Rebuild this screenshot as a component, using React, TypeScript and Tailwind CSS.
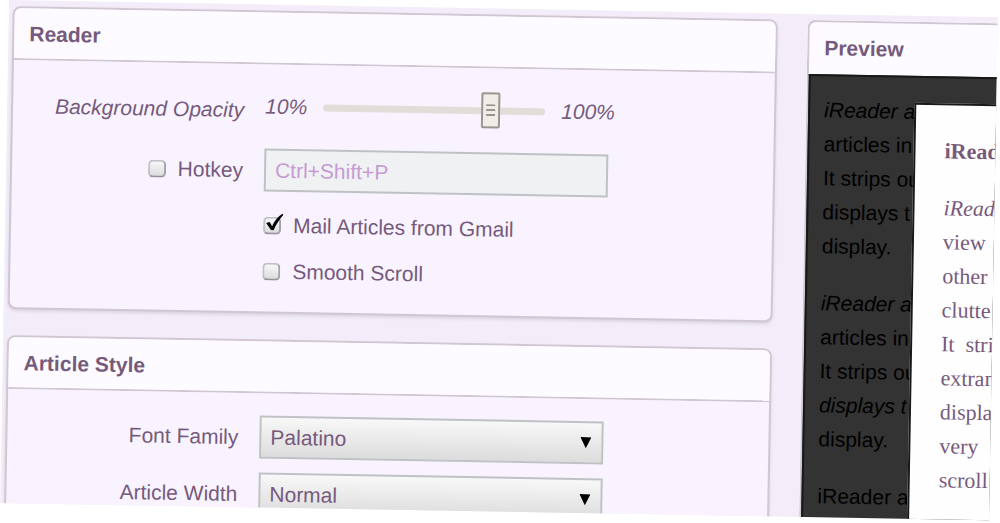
import React, { useState } from "react";

const previewText = [
  ["iReader a", "articles in", "It strips ou", "displays t", "display."],
  ["iReader a", "articles in", "It strips ou", "displays t", "display."],
  ["iReader a"],
];

const articleLines = ["iRead", "view", "other", "clutte", "It  stri", "extran", "displa", "very", "scroll"];

const articleFields = [
  { id: "font-family", label: "Font Family", options: ["Palatino", "Georgia", "Helvetica"] },
  { id: "article-width", label: "Article Width", options: ["Normal", "Narrow", "Wide"] },
];

function Panel({ title, children }: { title: string; children: React.ReactNode }) {
  return (
    <section className="rounded-lg border-2 border-[#d0c7d3] bg-[#f8f3fe] shadow-[0_2px_3px_#ddd5e2]">
      <h2 className="h-[52px] rounded-t-md border-b-2 border-[#d0c7d3] bg-[#fdfbff] px-[15px] text-[21px] font-bold leading-[52px]">
        {title}
      </h2>
      {children}
    </section>
  );
}

function Checkbox({ id, checked, onChange }: { id: string; checked: boolean; onChange: (v: boolean) => void }) {
  return (
    <span className="relative inline-flex">
      <input
        id={id}
        type="checkbox"
        checked={checked}
        onChange={(e) => onChange(e.target.checked)}
        className="h-[18px] w-[18px] appearance-none rounded-[5px] border-2 border-[#c4c0c7] border-b-[#96929a] border-r-[#a5a1a8] bg-linear-to-b from-[#f8f8f8] to-[#dcdcdc]"
      />
      {checked && (
        <svg className="pointer-events-none absolute -top-1 left-0" width="22" height="22" viewBox="0 0 22 22">
          <path d="M3 10.500 L6.500 9.500 L9 13.500 C11.500 8 14.500 4 19 1 L20 2 C16 7 13 12 10.500 17.500 L8 17.500 Z" fill="#000" />
        </svg>
      )}
    </span>
  );
}

export default function App() {
  const [opacity, setOpacity] = useState(80);
  const [hotkey, setHotkey] = useState(false);
  const [mail, setMail] = useState(true);
  const [smooth, setSmooth] = useState(false);

  return (
    <div className="h-screen overflow-hidden bg-white pl-[9px] pr-[2px] font-['Liberation_Sans',sans-serif] text-[21px] text-[#765a7c]">
      <main className="flex h-[calc(100vh-20px)] origin-top-left rotate-1 gap-[30px] overflow-hidden bg-[#f3ecf9] pl-1 pt-[6px]">
        <div className="flex min-w-0 flex-1 flex-col gap-[26px]">
          <Panel title="Reader">
            <div className="grid grid-cols-[231px_1fr] items-center gap-x-[21px] gap-y-[14px] pb-6 pt-[22px]">
              <label htmlFor="opacity" className="text-right italic">
                Background Opacity
              </label>
              <div className="flex h-12 items-center gap-4 pb-2">
                <span className="italic">10%</span>
                <input
                  id="opacity"
                  type="range"
                  min={10}
                  max={100}
                  value={opacity}
                  onChange={(e) => setOpacity(Number(e.target.value))}
                  className="h-[7px] w-[222px] appearance-none rounded-sm bg-[#e2ddd8] [&::-webkit-slider-thumb]:h-9 [&::-webkit-slider-thumb]:w-[19px] [&::-webkit-slider-thumb]:appearance-none [&::-webkit-slider-thumb]:rounded-xs [&::-webkit-slider-thumb]:border-2 [&::-webkit-slider-thumb]:border-[#9c958d] [&::-webkit-slider-thumb]:bg-[#f0ece7] [&::-webkit-slider-thumb]:bg-[repeating-linear-gradient(#9c958d_0_2px,transparent_2px_5px)] [&::-webkit-slider-thumb]:bg-[length:9px_12px] [&::-webkit-slider-thumb]:bg-center [&::-webkit-slider-thumb]:bg-no-repeat"
                />
                <span className="italic">100%</span>
              </div>

              <div className="flex items-center justify-end gap-3">
                <Checkbox id="hotkey" checked={hotkey} onChange={setHotkey} />
                <label htmlFor="hotkey">Hotkey</label>
              </div>
              <input
                type="text"
                aria-label="Hotkey combination"
                defaultValue="Ctrl+Shift+P"
                className="h-[43px] w-[344px] border-2 border-[#bfc2c4] bg-[#f0f1f3] px-[9px] text-[#c79bd3]"
              />

              <div className="col-start-2 flex flex-col gap-[14px] pt-1">
                <div className="flex h-8 items-center gap-3">
                  <Checkbox id="mail" checked={mail} onChange={setMail} />
                  <label htmlFor="mail">Mail Articles from Gmail</label>
                </div>
                <div className="flex h-8 items-center gap-3">
                  <Checkbox id="smooth" checked={smooth} onChange={setSmooth} />
                  <label htmlFor="smooth">Smooth Scroll</label>
                </div>
              </div>
            </div>
          </Panel>

          <Panel title="Article Style">
            <div className="grid grid-cols-[231px_1fr] items-center gap-x-[21px] gap-y-[14px] pb-6 pt-[22px]">
              {articleFields.map((field) => (
                <React.Fragment key={field.id}>
                  <label htmlFor={field.id} className="text-right">
                    {field.label}
                  </label>
                  <div className="relative w-[344px]">
                    <select
                      id={field.id}
                      className="h-[43px] w-full appearance-none border-2 border-[#bfc2c4] bg-linear-to-b from-[#f8f8f8] to-[#dcdcdc] px-[9px]"
                    >
                      {field.options.map((option) => (
                        <option key={option}>{option}</option>
                      ))}
                    </select>
                    <svg className="pointer-events-none absolute right-3 top-4" width="11" height="11" viewBox="0 0 11 11">
                      <path d="M0 0h11L5.500 11z" fill="#000" />
                    </svg>
                  </div>
                </React.Fragment>
              ))}
            </div>
          </Panel>
        </div>

        <aside className="flex w-[190px] shrink-0 flex-col rounded-tl-lg border-l-2 border-t-2 border-[#d0c7d3] bg-[#fdfbff]">
          <h2 className="h-[52px] shrink-0 px-[15px] text-[21px] font-bold leading-[52px]">Preview</h2>
          <div className="relative flex-1 border-2 border-r-0 border-[#181818] bg-[#333]">
            <div className="px-[14px] pt-[17px] leading-[34px] text-black">
              {previewText.map((lines, i) => (
                <div key={i} className="mb-[23px]">
                  {lines.map((line, j) => (
                    <p
                      key={j}
                      className={(i < 2 && j === 0) || (i === 1 && j === 3) ? "whitespace-nowrap italic" : "whitespace-nowrap"}
                    >
                      {line}
                    </p>
                  ))}
                </div>
              ))}
            </div>
            <article className="absolute -bottom-1 left-[104px] right-0 top-[25px] overflow-hidden border-l-2 border-t-2 border-[#181818] bg-[#fefefe] pl-[29px] pt-[29px] font-['Liberation_Serif',serif] text-[22px] leading-[34px]">
              <h3 className="mb-[23px] font-bold">iRead</h3>
              {articleLines.map((line, i) => (
                <p key={line} className={i === 0 ? "whitespace-pre italic" : "whitespace-pre"}>
                  {line}
                </p>
              ))}
            </article>
          </div>
        </aside>
      </main>
    </div>
  );
}
